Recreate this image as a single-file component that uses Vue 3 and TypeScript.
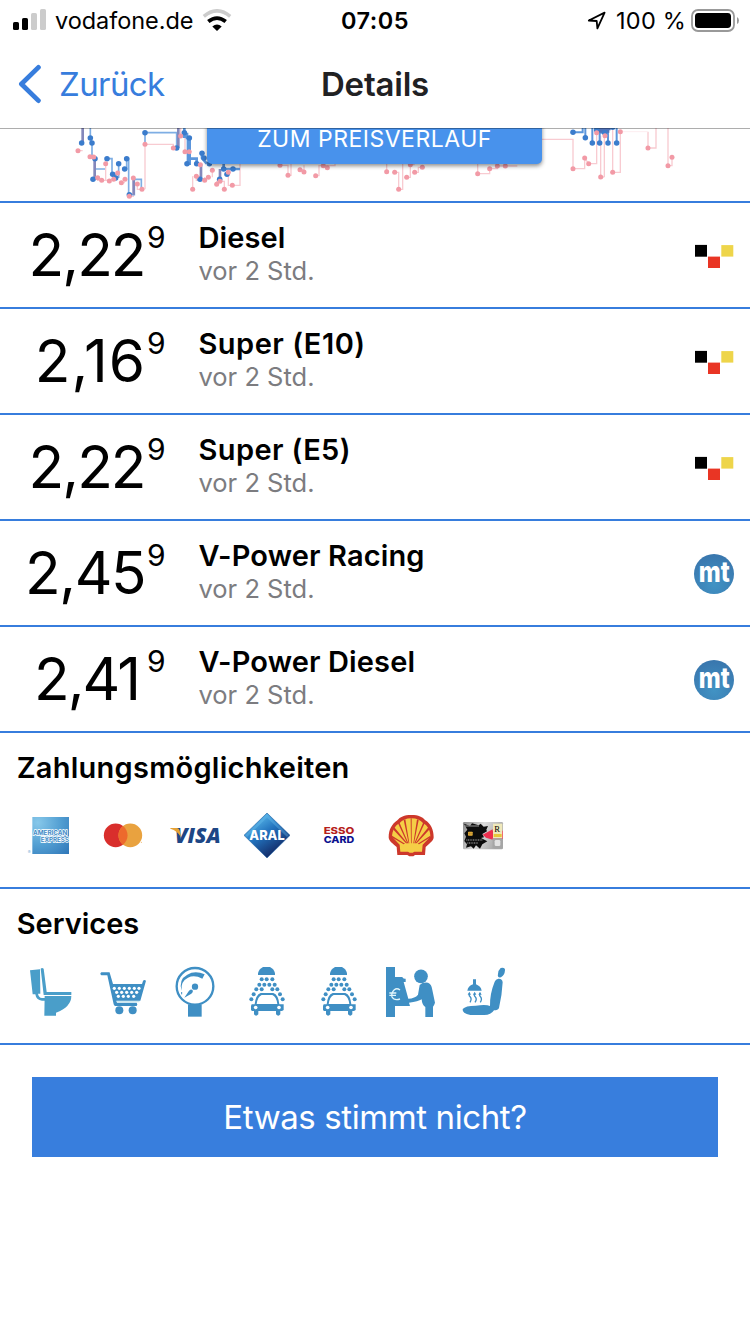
<script setup lang="ts">
interface Fuel {
  price: string
  name: string
  age: string
  source: 'mtsk' | 'mt'
}

const fuels: Fuel[] = [
  { price: '2,22', name: 'Diesel', age: 'vor 2 Std.', source: 'mtsk' },
  { price: '2,16', name: 'Super (E10)', age: 'vor 2 Std.', source: 'mtsk' },
  { price: '2,22', name: 'Super (E5)', age: 'vor 2 Std.', source: 'mtsk' },
  { price: '2,45', name: 'V-Power Racing', age: 'vor 2 Std.', source: 'mt' },
  { price: '2,41', name: 'V-Power Diesel', age: 'vor 2 Std.', source: 'mt' },
]

const blueLeft = [
  [65, 69], [91, 54], [96, 69], [105, 116], [99, 178], [141, 116], [176, 131], [200, 116], [194, 147],
  [158, 163], [167, 174], [208, 224], [255, 38], [373, 38], [388, 54], [350, 84], [381, 131], [426, 100],
  [410, 131], [432, 114], [420, 178], [479, 178], [491, 147], [501, 163], [519, 147], [448, 131],
]
const redLeft = [
  [54, 92], [90, 110], [101, 111], [137, 131], [113, 173], [125, 181], [148, 183], [161, 178], [173, 159],
  [184, 188], [195, 178], [208, 229], [220, 174], [232, 192], [246, 208], [255, 73], [340, 84], [362, 48],
  [375, 95], [388, 95], [421, 134], [409, 169], [398, 208], [434, 181], [445, 172], [457, 151], [470, 193],
  [480, 184], [493, 208], [505, 157], [517, 196], [660, 136], [684, 166], [720, 149], [732, 156], [767, 167],
  [790, 137], [802, 143],
]
const blueRight = [[609, 37], [646, 53], [667, 69], [689, 69], [704, 38], [714, 69], [740, 69], [680, 30], [728, 22]]
const redRight = [
  [50, 155], [74, 157], [86, 208], [110, 172], [121, 134], [134, 157], [157, 142], [323, 161], [359, 146],
  [382, 138], [406, 138], [609, 146], [644, 114], [656, 131], [680, 38], [692, 171], [705, 47], [728, 157],
  [751, 35], [834, 84], [894, 137], [906, 112],
]

const row = (y: number, xs: number[]): number[][] => xs.map((x) => [x, y])
const cartHoles = [...row(115, [313, 328, 343, 358, 373, 387]), ...row(127, [320, 335, 350, 365, 380]), ...row(139, [325, 340, 355, 371])]
const drops = [
  ...row(88, [305, 320, 337]), ...row(104, [298, 313, 328, 344]), ...row(118, [289, 305, 337, 352]),
  ...row(133, [281, 360]), ...row(148, [274, 368]),
]
</script>

<template>
  <div class="screen">
    <div class="status">
      <svg class="signal" width="34" height="22" viewBox="0 0 34 22">
        <rect x="0" y="13" width="6" height="8" rx="1.6" />
        <rect x="9" y="9" width="6" height="12" rx="1.6" />
        <rect x="18" y="4" width="6" height="17" rx="1.6" fill="#ccc" />
        <rect x="27" y="0" width="6" height="21" rx="1.6" fill="#ccc" />
      </svg>
      <span class="carrier">vodafone.de</span>
      <svg class="wifi" width="30" height="23" viewBox="0 0 30 23" fill="none">
        <path d="M1.8 7.3Q15-3.6 28.2 7.3" stroke="#ccc" stroke-width="3.6" />
        <path d="M6.3 12.6Q15 5.6 23.7 12.6" stroke="#000" stroke-width="3.8" />
        <path d="M10.3 17.4Q15 13.7 19.7 17.4L15 22Z" fill="#000" />
      </svg>
      <span class="clock">07:05</span>
      <div class="right">
        <svg class="arrow" width="20" height="20" viewBox="0 0 20 20" fill="none">
          <path d="M1.8 9.5L17.6 1.6L10.4 17.4L9.7 10Z" stroke="#000" stroke-width="1.8" stroke-linejoin="round" />
        </svg>
        <span class="percent">100 %</span>
        <svg width="49" height="24" viewBox="0 0 49 24">
          <rect x="1" y="1" width="42" height="21" rx="6" fill="#fff" stroke="#999" stroke-width="1.8" />
          <rect x="4" y="4" width="36" height="15" rx="3.4" />
          <path d="M46 8Q48 9 48 11.5T46 15Z" fill="#999" />
        </svg>
      </div>
    </div>

    <div class="nav">
      <svg class="chevron" width="24" height="40" viewBox="0 0 24 40" fill="none">
        <path d="M21.4 3.4L4.4 20L21.4 36.6" stroke="#377ddd" stroke-width="4.8" stroke-linecap="round" stroke-linejoin="round" />
      </svg>
      <span class="back">Zurück</span>
      <span class="title">Details</span>
    </div>

    <div class="chart">
      <svg class="plot" width="750" height="73" viewBox="0 128 750 73">
        <g transform="translate(60 120) scale(.33333)" fill="none">
          <path d="M54 92H68M90 110H105V173H113V181H148M137 131V181M184 188H195M208 229H220V174M232 192V208H246M255 208V73H340V84M362 48V24M362 24V48H375V95M421 134V169H409V181H434V172M398 208V169M457 151V172M470 193V184H493V208M505 157V196H540V131M660 136H684V166H693V131M720 149H732V136M767 167H777V137H802H825V131" stroke="#f8cbd1" stroke-width="4" />
          <path d="M69 24V69H60M91 24V54L96 69V110M105 116V178H99M105 147H135M141 116H156V163H167V181M176 131V174M200 116V147H194M200 116H206V224H223V178H244V205M255 73V38H350V84" stroke="#7eaee4" stroke-width="5" />
          <path d="M68 24V69M104 112V178M221 175V224M355 24V84M423 131V178M480 147V178" stroke="#8488bb" stroke-width="8" />
          <path d="M373 24V54M381 38V54H389V116H410V131M381 131H389V54M384 54V131M426 100V114L440 131M491 131V147H519H540" stroke="#5b96dc" stroke-width="8" />
          <g fill="#3b7ccc"><circle v-for="(p, i) in blueLeft" :key="i" :cx="p[0]" :cy="p[1]" r="8.3" /></g>
          <g fill="#f29aa6"><circle v-for="(p, i) in redLeft" :key="i" :cx="p[0]" :cy="p[1]" r="7.5" /></g>
        </g>
        <g transform="translate(370 120) scale(.33333)" fill="none">
          <path d="M50 155V131M74 157H86V208H98V131M110 172H121V134H134M134 157H145V142H157M323 131V161H359V146H382V138H442M515 58H609V146H644V114L656 131H680V24M692 171V47M703 171V47M692 171H703M728 157V24M728 157H751V35M834 35V84H858V24M894 24V137H906V112" stroke="#f8cbd1" stroke-width="4" />
          <path d="M751 35H834" stroke="#fdeef0" stroke-width="3" />
          <path d="M609 37H638V24M646 53V24M667 69V24M689 69V24M714 69V24M740 69V24M680 38H714" stroke="#5b96dc" stroke-width="6" />
          <path d="M673 27H722M676 34H718" stroke="#4f72b8" stroke-width="8" />
          <g fill="#3b7ccc"><circle v-for="(p, i) in blueRight" :key="i" :cx="p[0]" :cy="p[1]" r="8.3" /></g>
          <g fill="#f29aa6"><circle v-for="(p, i) in redRight" :key="i" :cx="p[0]" :cy="p[1]" r="7.5" /></g>
        </g>
      </svg>
      <div class="history"><span>ZUM PREISVERLAUF</span></div>
    </div>

    <div v-for="(f, i) in fuels" :key="i" class="fuel">
      <div class="price" :class="'p' + i">{{ f.price }}</div>
      <div class="sup">9</div>
      <div class="info">
        <div class="name"><span :class="'n' + i">{{ f.name }}</span></div>
        <div class="age">{{ f.age }}</div>
      </div>
      <svg v-if="f.source === 'mtsk'" class="badge" width="40" height="40" viewBox="0 0 40 40">
        <rect x="1" y="8.9" width="12" height="11.8" />
        <rect x="14" y="20.6" width="12" height="11.4" fill="#e93524" />
        <rect x="27.3" y="9.1" width="12" height="11.5" fill="#eed54a" />
      </svg>
      <svg v-else class="badge" width="40" height="40" viewBox="0 0 40 40">
        <defs>
          <radialGradient id="mtfill" cx=".5" cy=".75" r=".75">
            <stop offset="0" stop-color="#4193c4" />
            <stop offset="1" stop-color="#3976ad" />
          </radialGradient>
        </defs>
        <circle cx="20" cy="20" r="20" fill="url(#mtfill)" />
        <text x="4.8" y="27.8" class="mt" textLength="31" lengthAdjust="spacingAndGlyphs">mt</text>
      </svg>
    </div>

    <div class="section">
      <h2><span class="h-pay">Zahlungsmöglichkeiten</span></h2>
      <div class="icons">
        <svg viewBox="15 180 216 216">
          <defs>
            <radialGradient id="amex" cx=".15" cy=".15" r="1.2">
              <stop offset="0" stop-color="#87c8ea" />
              <stop offset=".5" stop-color="#54a0d3" />
              <stop offset="1" stop-color="#2f76b8" />
            </radialGradient>
          </defs>
          <rect x="67" y="231" width="110" height="111" fill="url(#amex)" />
          <text class="amex" x="69" y="286" textLength="103" lengthAdjust="spacingAndGlyphs">AMERICAN</text>
          <text class="amex" x="92" y="307" textLength="85" lengthAdjust="spacingAndGlyphs">EXPRESS</text>
          <text x="53" y="342" font-size="13" fill="#7fb2d8" font-family="Inter, sans-serif">®</text>
        </svg>
        <svg viewBox="231 180 216 216">
          <circle cx="317" cy="286" r="35.5" fill="#d92e2c" />
          <circle cx="361" cy="286" r="35.5" fill="#e9a23f" />
          <path d="M339 258A35.5 35.5 0 0 1 339 314A35.5 35.5 0 0 1 339 258Z" fill="#ed6a2c" />
          <circle cx="394" cy="307" r="1.5" fill="#e9a23f" />
        </svg>
        <svg viewBox="447 180 216 216">
          <text class="visa" x="494" y="309" textLength="138" lengthAdjust="spacingAndGlyphs">VISA</text>
          <path d="M481 264H500Q508 265 510 275L513 292Q503 272 481 266Z" fill="#e5a134" />
        </svg>
        <svg viewBox="663 180 216 216">
          <defs>
            <linearGradient id="aral" x1=".25" y1=".1" x2=".75" y2=".85">
              <stop offset="0" stop-color="#58b7ea" />
              <stop offset=".45" stop-color="#2272bd" />
              <stop offset="1" stop-color="#132a66" />
            </linearGradient>
          </defs>
          <path d="M771 219L840 286L771 354L702 286Z" fill="url(#aral)" stroke="#2a6aa9" stroke-width="2" />
          <path d="M771 223L706 286L711 291L771 233L831 291L836 286Z" fill="#6cc0ee" opacity=".35" />
          <text class="aral" x="718" y="299" textLength="106" lengthAdjust="spacingAndGlyphs">ARAL</text>
        </svg>
        <svg viewBox="99 30 216 216">
          <text class="esso" x="161" y="132" fill="#b5201b" textLength="92" lengthAdjust="spacingAndGlyphs">ESSO</text>
          <text class="esso" x="161" y="159.5" fill="#0b118f" textLength="92" lengthAdjust="spacingAndGlyphs">CARD</text>
        </svg>
        <svg viewBox="315 30 216 216">
          <path d="M424 75C446 75 458 81 466 91C482 101 491 118 491 142C491 152 478 161 467 171L465 195H435L430 199H418L412 195H382L380 171C368 161 356 153 356 142C356 118 366 102 382 91C390 81 402 75 424 75Z" fill="#cd382b" />
          <path d="M424 85C440 85 451 90 459 99C475 108 481 123 481 140L458 164L456 185H433L428 188H419L414 185H391L389 164L366 140C367 123 373 108 389 99C397 90 408 85 424 85Z" fill="#f5ce46" />
          <path d="M416 160L401 90L406 88L418 160ZM412 160L384 100L388 97L415 160ZM408 160L369 118L373 112L412 160ZM401 163L365 142L366 137L405 161ZM432 160L446 90L441 88L430 160ZM436 160L464 100L460 97L433 160ZM440 160L479 118L475 112L436 160ZM447 163L482 142L481 137L443 161ZM423 160L422 85H425L425 160Z" fill="#cd382b" />
        </svg>
        <svg viewBox="531 30 216 216">
          <defs>
            <linearGradient id="card" x2="1" y2=".3">
              <stop offset="0" stop-color="#8a8a8a" />
              <stop offset=".5" stop-color="#dcdcdc" />
              <stop offset="1" stop-color="#a7a7a7" />
            </linearGradient>
          </defs>
          <rect x="579" y="96" width="120" height="82" rx="4" fill="url(#card)" />
          <path d="M582 101L600 108L606 100L626 106L632 101L641 110L654 108L649 119L651 124L637 132L642 142L633 144L652 154L637 163L630 176L618 166L611 176L603 169L588 173L591 163L583 153L588 140L583 130L592 119Z" fill="#0c0c0c" />
          <path d="M586 108H628" stroke="#999" stroke-width="5" stroke-dasharray="4 2" />
          <path d="M638 134L668 118V149L648 143ZM668 122H699V146H668Z" fill="#ee2f4e" />
          <rect x="594" y="125" width="14" height="12" rx="2" fill="#efb73e" />
          <path d="M598 125V137M603 125V137M594 131H608" stroke="#8d681d" stroke-width="1" />
          <rect x="669" y="101" width="28" height="44" fill="#f0e9bb" />
          <rect x="671" y="132" width="24" height="9" fill="#e8c63b" />
          <text x="673" y="125" font-size="26" font-family="Liberation Serif, serif">R</text>
          <path d="M589 150H638M592 159H624" stroke="#777" stroke-width="4" stroke-dasharray="3 2" />
          <rect x="668" y="145" width="29" height="29" fill="#a6a6a6" />
          <rect x="674" y="150" width="17" height="18" rx="4" fill="#e3e3e3" />
        </svg>
      </div>
    </div>

    <div class="section">
      <h2><span class="h-serv">Services</span></h2>
      <div class="icons">
        <svg viewBox="15 18 216 216" fill="#4a9ec9">
          <path d="M60 61L90 58L91 131H84Q86 143 96 144H105V152H96Q78 150 76 133H68Z" />
          <path d="M92 56Q96 52 101 56L110 126H184V135H101Z" />
          <path d="M104 138H184Q184 171 138 188V197H103Z" />
        </svg>
        <svg viewBox="231 18 216 216" fill="#3f8fc4">
          <path d="M274 67H298Q299 67 300 71L309 102H396L399 93Q402 87 408 92L391 152H319L321 158H380Q384 163 380 168H315Q312 167 311 163L292 76H274Q268 72 274 67Z" />
          <path d="M320 153H389L388 157H321Z" fill="#cfe9ef" />
          <circle v-for="(p, i) in cartHoles" :key="i" :cx="p[0]" :cy="p[1]" r="4.8" fill="#fff" />
          <circle cx="328" cy="181" r="12" />
          <circle cx="368" cy="181" r="12" />
        </svg>
        <svg viewBox="-3 18 216 216" fill="#3f8fc4">
          <circle cx="105" cy="109" r="55" fill="none" stroke="#3f8fc4" stroke-width="7" />
          <path d="M65 122Q55 88 82 74Q105 60 134 73L127 86Q103 73 84 83Q61 94 65 122Z" />
          <circle cx="105" cy="110" r="9.5" />
          <path d="M73 143L86 124Q92 115 98 121Q101 127 94 131Z" />
          <path d="M65 126V133" stroke="#3f8fc4" stroke-width="3" />
          <rect x="84" y="163" width="41" height="37" />
        </svg>
        <svg v-for="n in 2" :key="n" viewBox="213 18 216 216" fill="#3f8fc4">
          <path d="M294 75V70Q297 57 309 51H330Q342 57 345 70V75Z" />
          <circle v-for="(p, i) in drops" :key="i" :cx="p[0]" :cy="p[1]" r="6" />
          <path d="M275 163H284Q287 134 302 129H340Q355 134 358 163H371V180L366 183H361V193Q355 201 348 193V183H295V193Q288 201 282 193V183H276L273 180V168ZM290 162H352Q349 140 337 135H305Q293 140 290 162Z" fill-rule="evenodd" />
          <circle cx="287" cy="172.5" r="5.5" fill="#fff" />
          <circle cx="357" cy="172.5" r="5.5" fill="#fff" />
        </svg>
        <svg viewBox="15 18 216 216" fill="#3f8fc4">
          <path d="M48 51H75V81H97Q98 87 107 86V96H101L115 146Q135 145 144 134L149 105Q158 96 174 98Q185 102 187 120L195 158Q193 165 189 170V201H166V171Q156 165 155 148Q145 155 117 158L120 168H75V201H48Z" />
          <circle cx="153" cy="79" r="20.5" />
          <path d="M90 120Q81 113 73 119Q63 128 66 141Q73 153 90 147M58 129H79M58 136H78" fill="none" stroke="#e3f6fb" stroke-width="4" />
        </svg>
        <svg viewBox="231 18 216 216" fill="#3f8fc4">
          <path d="M392 54Q406 51 405 61Q404 76 393 82Q381 84 384 72Q385 60 392 54Z" />
          <path d="M374 95Q377 87 385 86Q397 85 398 97Q396 136 387 174Q384 181 372 181Q363 195 343 195H301Q276 190 278 177Q286 167 317 167Q349 163 360 168Q359 132 374 95Z" />
          <path d="M309 88H318V103Q333 109 335 122H292Q294 108 309 103Z" />
          <path d="M298 130Q296 137 301 141Q306 147 300 157M314 130Q311 137 316 141Q322 147 315 157M330 130Q327 137 332 141Q337 147 331 157" fill="none" stroke="#3f8fc4" stroke-width="4" />
          <path d="M298 125L293 134H303ZM314 125L309 134H319ZM330 125L325 134H335Z" />
        </svg>
      </div>
    </div>

    <div class="report"><span>Etwas stimmt nicht?</span></div>
  </div>
</template>

<style>
html,
body {
  background: #fff;
  overflow: hidden;
}
</style>

<style scoped>
.screen {
  width: 750px;
  height: 1334px;
  background: #fff;
  color: #000;
  font-family: Inter, "Liberation Sans", sans-serif;
  white-space: nowrap;
}
.status {
  height: 41px;
  display: grid;
  grid-template-columns: 42px 147px 1fr auto 1fr;
  align-items: center;
  padding: 0 12px 0 13px;
  font-size: 23.5px;
  line-height: 41px;
  position: relative;
}
.signal {
  margin-top: -2px;
}
.carrier {
  letter-spacing: -0.05px;
}
.wifi {
  margin-top: -1px;
}
.clock {
  position: absolute;
  left: 0;
  width: 750px;
  text-align: center;
  font-weight: 600;
  letter-spacing: 0.5px;
}
.right {
  position: absolute;
  right: 10px;
  display: flex;
  align-items: center;
  height: 39px;
}
.arrow {
  margin-top: 1px;
}
.percent {
  margin: 0 5px 0 9px;
  letter-spacing: 0.2px;
}
.nav {
  height: 87px;
  display: flex;
  align-items: center;
  position: relative;
  font-size: 33px;
  line-height: 84px;
}
.chevron {
  margin: -1px 0 0 17px;
}
.back {
  margin: -2px 0 0 18px;
  color: #377ddd;
  letter-spacing: -0.6px;
}
.title {
  position: absolute;
  left: 0;
  top: 1px;
  width: 750px;
  text-align: center;
  font-weight: 600;
  color: #212123;
  letter-spacing: -0.2px;
}
.chart {
  height: 73px;
  border-bottom: 2px solid #377ddd;
  position: relative;
  overflow: hidden;
}
.chart::after {
  content: "";
  position: absolute;
  inset: 0 0 auto;
  height: 1px;
  background: rgba(0, 0, 0, 0.32);
}
.plot {
  display: block;
  filter: blur(0.75px);
}
.history {
  position: absolute;
  left: 207px;
  top: -28px;
  width: 335px;
  height: 64px;
  border-radius: 5px;
  background: #4892ec;
  color: #fff;
  box-shadow: 0 2px 4px rgba(0, 0, 0, 0.45);
  text-align: center;
  font-size: 23px;
  line-height: 78px;
  letter-spacing: 0.5px;
}
.fuel {
  height: 104px;
  border-bottom: 2px solid #377ddd;
  display: flex;
}
.price {
  width: 146px;
  box-sizing: border-box;
  text-align: right;
  font-size: 58.5px;
  line-height: 103px;
}
.p0,
.p2 {
  letter-spacing: -2px;
  padding-right: 1.5px;
}
.p1 {
  letter-spacing: 0.9px;
}
.p3 {
  letter-spacing: -1.5px;
  padding-right: 1px;
}
.p4 {
  letter-spacing: -2px;
  padding-right: 7px;
}
.sup {
  width: 52px;
  font-size: 30px;
  line-height: 68px;
  padding-left: 1px;
  box-sizing: border-box;
}
.info {
  flex: 1;
  padding: 15px 0 0 0.5px;
}
.name {
  font-size: 29px;
  font-weight: 600;
  line-height: 40px;
}
.n0 {
  letter-spacing: 0.1px;
}
.n1 {
  letter-spacing: 0.5px;
}
.n2 {
  letter-spacing: 0.4px;
}
.n3,
.n4 {
  letter-spacing: 0.12px;
}
.age {
  font-size: 25.5px;
  line-height: 26px;
  color: #7c7c80;
}
.badge {
  margin: 33px 16px 0 0;
}
.mt {
  font: 800 28px Inter, sans-serif;
  fill: #fff;
}
.section {
  height: 154px;
  border-bottom: 2px solid #377ddd;
}
h2 {
  box-sizing: border-box;
  margin: 0;
  padding: 15px 0 0 16.7px;
  height: 67px;
  font-size: 29px;
  font-weight: 600;
  line-height: 40px;
}
.h-pay {
  letter-spacing: 0.25px;
}
.icons {
  display: flex;
  margin-left: 15px;
}
.icons svg {
  width: 72px;
  height: 72px;
}
.amex {
  font: 700 20px Inter, sans-serif;
  fill: #3f8bc6;
  stroke: #fff;
  stroke-width: 4px;
  paint-order: stroke;
}
.visa {
  font: italic 800 64px "Open Sans", sans-serif;
  fill: #1d4685;
}
.aral {
  font: 800 41px Inter, sans-serif;
  fill: #fff;
}
.esso {
  font: 800 28px Inter, sans-serif;
}
.report {
  margin: 32px 32px 0;
  height: 80px;
  background: #387edd;
  color: #fff;
  text-align: center;
  font-size: 33px;
  line-height: 80px;
  letter-spacing: -0.4px;
}
</style>
